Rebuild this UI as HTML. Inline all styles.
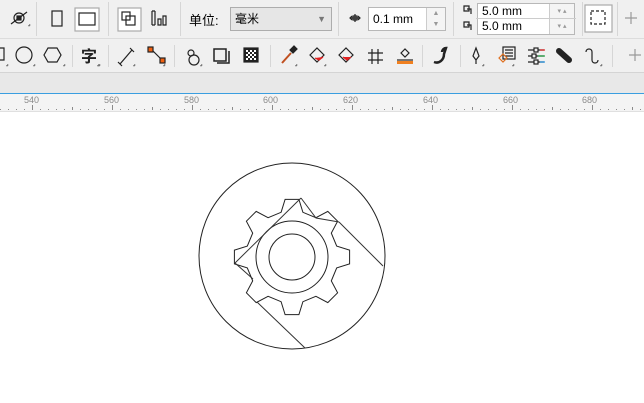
<!DOCTYPE html>
<html><head><meta charset="utf-8"><style>
body{margin:0;width:644px;height:403px;overflow:hidden;background:#fff;font-family:"Liberation Sans","Noto Sans CJK SC",sans-serif;position:relative}
.r1{position:absolute;left:0;top:0;width:644px;height:38px;background:#f0f0f0;border-bottom:1px solid #dcdcdc}
.r2{position:absolute;left:0;top:39px;width:644px;height:33px;background:#f0f0f0;border-bottom:1px solid #d4d4d4}
.band{position:absolute;left:0;top:73px;width:644px;height:20px;background:#e8e8e8}
.ruler{position:absolute;left:0;top:93px;width:644px;height:17px;background:#f4f4f4;border-top:1px solid #3a9ee0;border-bottom:1px solid #e0e0e0}
.sep{position:absolute;width:1px;background:#d6d6d6}
.t{position:absolute;font-size:12px;color:#000}
.box{position:absolute;background:#fff;border:1px solid #b8b8b8;font-size:12px;color:#000;box-sizing:border-box;padding-left:4px}
</style></head><body>
<div class="r1"></div><div class="r2"></div><div class="band"></div><div class="ruler"></div>
<div class="sep" style="left:36px;top:2px;height:34px"></div>
<div class="sep" style="left:108px;top:2px;height:34px"></div>
<div class="sep" style="left:180px;top:2px;height:34px"></div>
<div class="sep" style="left:338px;top:2px;height:34px"></div>
<div class="sep" style="left:453px;top:2px;height:34px"></div>
<div class="sep" style="left:582px;top:2px;height:34px"></div>
<div class="sep" style="left:617px;top:2px;height:34px"></div>
<div class="sep" style="left:72px;top:45px;height:22px"></div>
<div class="sep" style="left:108px;top:45px;height:22px"></div>
<div class="sep" style="left:174px;top:45px;height:22px"></div>
<div class="sep" style="left:270px;top:45px;height:22px"></div>
<div class="sep" style="left:422px;top:45px;height:22px"></div>
<div class="sep" style="left:460px;top:45px;height:22px"></div>
<div class="sep" style="left:612px;top:45px;height:22px"></div>
<div class="t" style="left:189px;top:10px;font-size:13px">单位:</div>
<div class="box" style="left:230px;top:7px;width:102px;height:24px;background:#e6e6e6;line-height:22px;border-color:#adadad">毫米<span style="position:absolute;right:5px;top:0;color:#777;font-size:9px">▼</span></div>
<div class="box" style="left:368px;top:7px;width:78px;height:24px;line-height:22px">0.1 mm<span style="position:absolute;right:0;top:0;width:18px;height:22px;border-left:1px solid #ccc;background:#f4f4f4;color:#999;font-size:7px;text-align:center;line-height:11px">▲<br>▼</span></div>
<div class="box" style="left:477px;top:3px;width:98px;height:32px;line-height:15px">5.0 mm<br>5.0 mm<span style="position:absolute;right:0;top:0;width:24px;height:30px;border-left:1px solid #ccc;background:#f4f4f4;color:#999;font-size:7px;text-align:center;line-height:15px">▾ ▴<br>▾ ▴</span></div>
<div style="position:absolute;left:476px;top:18px;width:100px;height:1px;background:#ccc"></div>
<svg style="position:absolute;left:0;top:0" width="644" height="110" fill="none" stroke="#222" stroke-width="1.2">
<circle cx="19" cy="18" r="5"/><path d="M11 24l16-12"/><rect x="17" y="16" width="4" height="4" fill="#222"/>
<rect x="52" y="11" width="10" height="15"/>
<rect x="75" y="8" width="24" height="23" fill="#fff" stroke="#aaa"/><rect x="79" y="13" width="16" height="12"/>
<rect x="118" y="8" width="23" height="23" fill="#fff" stroke="#aaa"/><rect x="122" y="12" width="8" height="8"/><rect x="126" y="16" width="9" height="9"/>
<path d="M152 11v14M155 11v14M152 11h3M152 25h3M158 19h3v6h-3zM163 16h3v9h-3z"/>
<path d="M351 18h8M355 14v8M352 16l-2 2 2 2M358 16l2 2-2 2"/><rect x="353" y="16" width="4" height="4"/>
<path d="M464 6h5v5h-5zM467 9h4v5M464 22h5v5h-5zM467 25h4v5"/>
<rect x="585" y="5" width="27" height="27" fill="#fff" stroke="#aaa"/><rect x="591" y="11" width="14" height="13" stroke-dasharray="3 2"/>
<path d="M631 12v12M625 18h12" stroke="#999"/>
<path d="M0 48h4v12h-4"/><circle cx="24" cy="55" r="8"/><path d="M48 48h9l4 7-4 7h-9l-4-7z"/>
<text x="81" y="62" font-size="16" fill="#222" stroke="none" font-weight="bold" font-family="Noto Sans CJK SC">字</text>
<path d="M120 64l12-14M118 62l4 4M130 48l4 4"/>
<path d="M152 50l10 10" /><rect x="148" y="47" width="5" height="5" fill="#f06010"/><rect x="160" y="58" width="5" height="5" fill="#f06010"/>
<circle cx="191" cy="53" r="3"/><circle cx="194" cy="60" r="5"/>
<rect x="214" y="49" width="12" height="12" stroke-width="1.5"/><path d="M217 63h12v-12" stroke-width="1.5"/>
<rect x="244" y="48" width="14" height="14" fill="#222"/><path d="M246 50h2v2h-2zM250 50h2v2h-2zM254 50h2v2h-2zM248 52h2v2h-2zM252 52h2v2h-2zM246 54h2v2h-2zM250 54h2v2h-2zM254 54h2v2h-2zM248 56h2v2h-2zM252 56h2v2h-2zM246 58h2v2h-2zM250 58h2v2h-2zM254 58h2v2h-2z" fill="#fff" stroke="none"/>
<path d="M282 63l9-10" stroke="#c05020" stroke-width="2"/><path d="M290 50l4-4 3 3-4 4z" fill="#222"/>
<path d="M310 55l7-7 7 7-7 7z"/><path d="M315 58l4 2 4-3" fill="#e02020" stroke="#e02020"/>
<path d="M339 55l7-7 7 7-7 7z"/><path d="M343 57l4 3 4-3" fill="#e02020" stroke="#e02020"/>
<path d="M372 49v15M378 49v15M368 53h15M368 60h15"/>
<path d="M397 60h16"/><rect x="397" y="61" width="16" height="3" fill="#f08020" stroke="none"/><path d="M401 53l4-4 4 4-4 4z"/>
<path d="M434 62c5 2 10-2 10-8l2-6c-2 0-4 2-4 4" stroke-width="2.5"/>
<path d="M476 48l-3 8 3 4 3-4z M476 60v4"/>
<rect x="503" y="47" width="12" height="12"/><path d="M505 50h8M505 53h8M505 56h8"/><path d="M499 58l4-4 4 4-4 4z" stroke="#e07020"/>
<path d="M528 50h6M538 50h6M528 56h4M536 56h8M528 62h6M538 62h6"/><rect x="534" y="48" width="4" height="4"/><rect x="532" y="54" width="4" height="4"/><rect x="534" y="60" width="4" height="4"/>
<path d="M540 50h5" stroke="#e02020"/><path d="M538 56h7" stroke="#20a040"/><path d="M540 62h5" stroke="#2090e0"/>
<path d="M559 51l10 9" stroke-width="6" stroke-linecap="round"/>
<path d="M586 52c0-4 6-4 6 0v8c0 4 6 4 6 0"/>
<path d="M635 49v12M629 55h12" stroke="#999"/>
<g fill="#777" stroke="#777" stroke-width="0.5">
<path d="M28 26l2-2v2z M98 66l2-2v2zM63 66l2-2v2zM33 66l2-2v2zM6 66l2-2v2zM97 66l2-2v2zM133 66l2-2v2zM163 66l2-2v2zM200 66l2-2v2zM295 66l2-2v2zM324 66l2-2v2zM482 66l2-2v2zM512 66l2-2v2zM600 66l2-2v2z"/>
</g>
<g id="ruler" stroke="#8a8a8a" stroke-width="1"></g>
<g font-size="9" fill="#8a8a8a" stroke="none" font-family="Liberation Sans">
<text x="24" y="103">540</text><text x="104" y="103">560</text><text x="184" y="103">580</text><text x="263" y="103">600</text><text x="343" y="103">620</text><text x="423" y="103">640</text><text x="503" y="103">660</text><text x="582" y="103">680</text></g>
</svg>
<svg style="position:absolute;left:0;top:110px" width="644" height="293" fill="none" stroke="#222" stroke-width="1">
<g transform="translate(0,-110)">
<circle cx="292" cy="256" r="93"/>
<circle cx="292" cy="257" r="36"/>
<circle cx="292" cy="257" r="23"/>
<path id="gear"/>
<path d="M301 198L235 263M301 198L316 218L339 222M339 222L383 266M235 263L253 279M257 302L305 348" stroke="#333"/>
</g></svg>
<script>
var g=document.getElementById('ruler'),s='';
for(var x=0;x<644;x+=8){var u=(x-32)/4;var m=((u%20)+20)%20;var h=m==0?5:(((u%10)+10)%10==0?3:1);s+='<line x1="'+(x+0.5)+'" y1="'+(110-h)+'" x2="'+(x+0.5)+'" y2="110"/>';}
g.innerHTML=s;
var d='',cx=292,cy=257,R=58,r=46;
for(var i=0;i<8;i++){var a=i*Math.PI/4-Math.PI/2;
var pts=[[r,a-0.24],[R,a-0.12],[R,a+0.12],[r,a+0.24]];
pts.forEach(function(p,j){d+=(i==0&&j==0?'M':'L')+(cx+p[0]*Math.cos(p[1])).toFixed(1)+' '+(cy+p[0]*Math.sin(p[1])).toFixed(1);});}
document.getElementById('gear').setAttribute('d',d+'Z');
</script>
</body></html>
